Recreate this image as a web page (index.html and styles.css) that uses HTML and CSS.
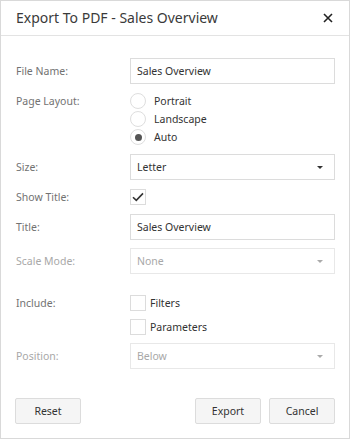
FILE: index.html
```html
<!DOCTYPE html>
<html lang="en">
<head>
    <meta charset="UTF-8">
    <meta name="viewport" content="width=device-width, initial-scale=1.0">
    <title>Export To PDF</title>
    <link rel="stylesheet" href="styles.css">
</head>
<body>

    <div class="dialog">
        <div class="header">
            <span class="title">Export To PDF - Sales Overview</span>
            <span class="close">
                <svg width="10" height="10" viewBox="0 0 10 10"><path d="M1 1L9 9M9 1L1 9" stroke="#222" stroke-width="1.6"/></svg>
            </span>
        </div>

        <div class="form">
            <label class="label">File Name:</label>
            <div class="input">Sales Overview</div>

            <label class="label small">Page Layout:</label>
            <div class="radios">
                <div class="radio-item"><span class="radio"></span>Portrait</div>
                <div class="radio-item"><span class="radio"></span>Landscape</div>
                <div class="radio-item"><span class="radio checked"></span>Auto</div>
            </div>

            <label class="label">Size:</label>
            <div class="input select">Letter<span class="arrow"></span></div>

            <label class="label small">Show Title:</label>
            <div class="checks">
                <div class="check-item">
                    <span class="checkbox">
                        <svg width="12" height="10" viewBox="0 0 12 10"><path d="M1 5.2L4.3 8.4L11 1.4" fill="none" stroke="#333" stroke-width="1.6"/></svg>
                    </span>
                </div>
            </div>

            <label class="label">Title:</label>
            <div class="input">Sales Overview</div>

            <label class="label disabled">Scale Mode:</label>
            <div class="input select disabled">None<span class="arrow"></span></div>

            <label class="label small include">Include:</label>
            <div class="checks include">
                <div class="check-item"><span class="checkbox"></span>Filters</div>
                <div class="check-item"><span class="checkbox"></span>Parameters</div>
            </div>

            <label class="label disabled">Position:</label>
            <div class="input select disabled">Below<span class="arrow"></span></div>
        </div>

        <div class="footer">
            <button class="btn">Reset</button>
            <div class="footer-right">
                <button class="btn">Export</button>
                <button class="btn">Cancel</button>
            </div>
        </div>
    </div>

</body>
</html>
```

FILE: styles.css
```css
body {
    margin: 0;
    padding: 0;
    background-color: #fff;
    font-family: "Noto Sans", "Open Sans", sans-serif;
    font-size: 10.5px;
    color: #333;
}

.dialog {
    width: 350px;
    height: 439px;
    box-sizing: border-box;
    border: 1px solid #d9d9d9;
    display: flex;
    flex-direction: column;
}

.header {
    height: 35px;
    box-sizing: border-box;
    border-bottom: 1px solid #e3e3e3;
    display: flex;
    justify-content: space-between;
    align-items: center;
    padding: 0 16px 1px 15px;
}

.header .title {
    font-size: 14px;
    color: #3a3a3a;
}

.header .close {
    display: flex;
}

.form {
    display: grid;
    grid-template-columns: 114px 205px;
    row-gap: 8px;
    padding: 22px 0 0 15px;
}

.label {
    color: #727272;
    line-height: 26px;
}

.label.small {
    line-height: 18px;
}

.label.disabled {
    color: #a8a8a8;
}

.input {
    height: 26px;
    box-sizing: border-box;
    border: 1px solid #dcdcdc;
    padding: 0 6px;
    line-height: 24px;
    color: #333;
    position: relative;
}

.input.disabled {
    border-color: #e8e8e8;
    color: #a8a8a8;
}

.select .arrow {
    position: absolute;
    right: 11px;
    top: 11px;
    border-left: 3px solid transparent;
    border-right: 3px solid transparent;
    border-top: 3px solid #333;
}

.select.disabled .arrow {
    border-top-color: #aaa;
}

.radios {
    display: flex;
    flex-direction: column;
}

.radio-item {
    height: 18px;
    display: flex;
    align-items: center;
    gap: 8px;
    color: #333;
}

.radio {
    width: 16px;
    height: 16px;
    box-sizing: border-box;
    border: 1px solid #dedede;
    border-radius: 50%;
    display: flex;
    align-items: center;
    justify-content: center;
}

.radio.checked::after {
    content: "";
    width: 7px;
    height: 7px;
    border-radius: 50%;
    background-color: #555;
}

.checks {
    display: flex;
    flex-direction: column;
    gap: 7px;
}

.check-item {
    height: 17px;
    display: flex;
    align-items: center;
    gap: 4px;
    color: #333;
}

.checkbox {
    width: 16px;
    height: 16px;
    box-sizing: border-box;
    border: 1px solid #dcdcdc;
    display: flex;
    align-items: center;
    justify-content: center;
}

.label.include,
.checks.include {
    margin-top: 12px;
}

.footer {
    margin-top: auto;
    display: flex;
    justify-content: space-between;
    padding: 0 14px 14px 14px;
}

.footer-right {
    display: flex;
    gap: 8px;
}

.btn {
    width: 66px;
    height: 26px;
    background-color: #f5f5f5;
    border: 1px solid #dcdcdc;
    border-radius: 2px;
    font-family: "Noto Sans", "Open Sans", sans-serif;
    font-size: 10.5px;
    color: #333;
    padding: 0;
}
```
